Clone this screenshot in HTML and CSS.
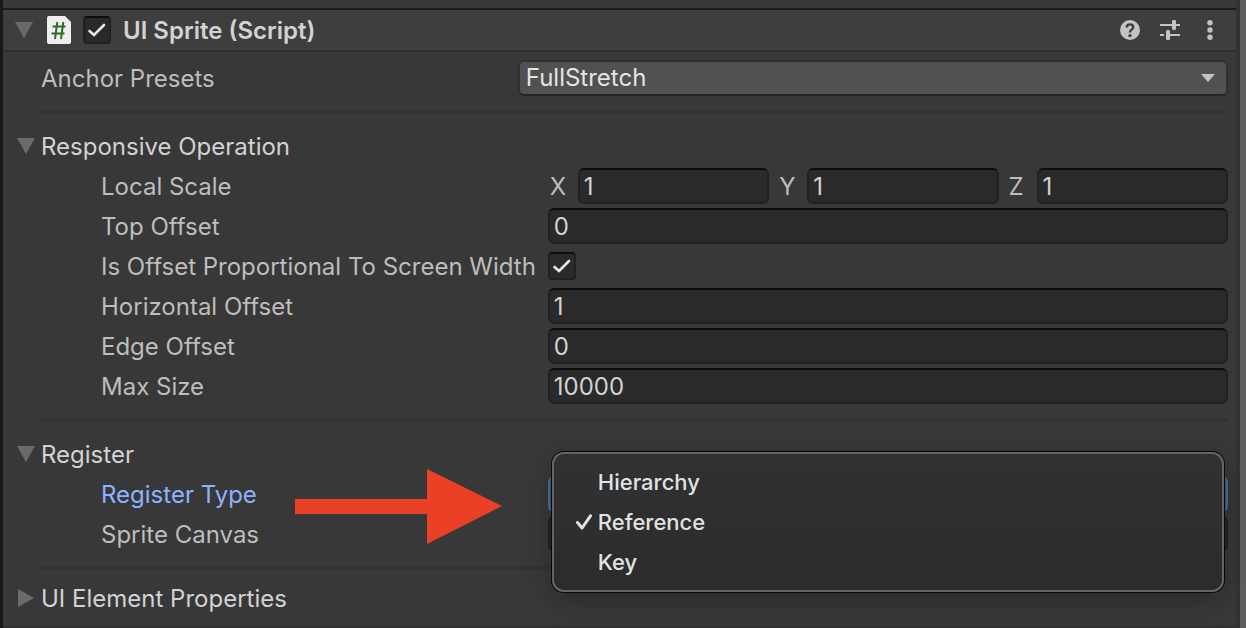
FILE: index.html
```html
<!DOCTYPE html>
<html lang="en">
<head>
<meta charset="utf-8">
<meta name="viewport" content="width=device-width, initial-scale=1">
<title>Inspector</title>
<link rel="stylesheet" href="styles.css">
</head>
<body>
<main class="inspector">
  <header class="header">
    <button class="fold" type="button" aria-label="Collapse component"><svg class="tri" viewBox="0 0 18 16"><path d="M0 0H18L9 16Z"/></svg></button>
    <svg class="script-icon" viewBox="0 0 24 28" aria-hidden="true">
      <path fill="#efefef" d="M2 0H18L24 6V26Q24 28 22 28H2Q0 28 0 26V2Q0 0 2 0Z"/>
      <path fill="none" stroke="#2f6b2c" stroke-width="2" d="M10.300 6L8 23M16.300 6L14 23M5.500 10.500H18.500M4.500 17.500H17.500"/>
    </svg>
    <input class="check" type="checkbox" checked aria-label="Enable UI Sprite">
    <h1 class="title">UI Sprite (Script)</h1>
    <div class="tools">
      <button class="tool" type="button" aria-label="Help"><svg viewBox="0 0 20 20"><circle cx="10" cy="10" r="10" fill="#c4c4c4"/><path d="M6.800 7.600Q6.800 4.400 10 4.400Q13.200 4.400 13.200 7.200Q13.200 8.800 11.500 9.700Q10 10.500 10 12.600" fill="none" stroke="#3e3e3e" stroke-width="2.400"/><circle cx="10" cy="15.600" r="1.700" fill="#3e3e3e"/></svg></button>
      <button class="tool" type="button" aria-label="Presets"><svg viewBox="0 0 20 20"><path d="M0 5H13M16 5H20M0 15H4M10 15H20" stroke="#c4c4c4" stroke-width="2"/><path d="M14 1.700V8.300M8 11.700V18.300" stroke="#c4c4c4" stroke-width="4" stroke-linecap="round"/></svg></button>
      <button class="tool" type="button" aria-label="More options"><svg viewBox="0 0 20 20" fill="#c4c4c4"><circle cx="10" cy="2.700" r="2.700"/><circle cx="10" cy="10" r="2.700"/><circle cx="10" cy="17.300" r="2.700"/></svg></button>
    </div>
  </header>

  <div class="body">
    <div class="row anchor">
      <label class="label" for="anchor">Anchor Presets</label>
      <div class="select-wrap">
        <select class="select" id="anchor"><option>FullStretch</option></select>
        <svg class="caret" viewBox="0 0 14 8" aria-hidden="true"><path d="M0 0H14L7 8Z"/></svg>
      </div>
    </div>
    <hr class="rule">

    <section class="group">
      <h2 class="group-title"><button class="fold" type="button" aria-label="Collapse Responsive Operation"><svg class="tri" viewBox="0 0 18 16"><path d="M0 0H18L9 16Z"/></svg></button><span class="caption">Responsive Operation</span></h2>
      <div class="props">
        <div class="row">
          <span class="label">Local Scale</span>
          <div class="vector">
            <label class="axis" for="sx">X</label><input class="field" id="sx" value="1">
            <label class="axis" for="sy">Y</label><input class="field" id="sy" value="1">
            <label class="axis" for="sz">Z</label><input class="field" id="sz" value="1">
          </div>
        </div>
        <div class="row"><label class="label" for="top">Top Offset</label><input class="field" id="top" value="0"></div>
        <div class="row"><label class="label" for="prop">Is Offset Proportional To Screen Width</label><input class="check" type="checkbox" id="prop" checked></div>
        <div class="row"><label class="label" for="hor">Horizontal Offset</label><input class="field" id="hor" value="1"></div>
        <div class="row"><label class="label" for="edge">Edge Offset</label><input class="field" id="edge" value="0"></div>
        <div class="row"><label class="label" for="max">Max Size</label><input class="field" id="max" value="10000"></div>
      </div>
    </section>
    <hr class="rule">

    <section class="group">
      <h2 class="group-title"><button class="fold" type="button" aria-label="Collapse Register"><svg class="tri" viewBox="0 0 18 16"><path d="M0 0H18L9 16Z"/></svg></button><span class="caption">Register</span></h2>
      <div class="props">
        <div class="row">
          <span class="label active" id="type-label">Register Type
            <svg class="arrow" viewBox="0 0 207 75" aria-hidden="true"><path d="M0 30H132V0L207 37L132 75V45H0Z"/></svg>
          </span>
          <div class="picker">
            <button class="field current" type="button" aria-labelledby="type-label"></button>
            <div class="menu" role="listbox" aria-labelledby="type-label">
              <button class="option" type="button" role="option">Hierarchy</button>
              <button class="option" type="button" role="option" aria-selected="true"><svg class="tick" viewBox="0 0 16 16" aria-hidden="true"><path d="M1.500 8.500L6 14L14.500 1.800"/></svg>Reference</button>
              <button class="option" type="button" role="option">Key</button>
            </div>
          </div>
        </div>
        <div class="row"><label class="label" for="canvas">Sprite Canvas</label><input class="field" id="canvas"></div>
      </div>
    </section>
    <hr class="rule">

    <section class="group closed">
      <h2 class="group-title"><button class="fold" type="button" aria-label="Expand UI Element Properties"><svg class="tri right" viewBox="0 0 16 18"><path d="M0 0L16 9L0 18Z"/></svg></button><span class="caption">UI Element Properties</span></h2>
    </section>
  </div>
</main>
</body>
</html>
```

FILE: styles.css
```css
* { box-sizing: border-box; }

body {
  margin: 0;
  background: #383838;
  color: #bdbdbd;
  font: 400 24px/40px Inter, "Liberation Sans", sans-serif;
}

button, input, select { font: inherit; color: inherit; margin: 0; }
button { padding: 0; border: 0; background: none; }

.inspector {
  min-height: 100vh;
  padding-top: 8px;
  border-left: 3px solid #191919;
  border-right: 6px solid #5f5f5f;
  box-shadow: inset -4px 0 #323232;
}

.header {
  display: flex;
  align-items: center;
  height: 44px;
  margin-right: 4px;
  padding: 0 16px 0 12px;
  border-top: 2px solid #1a1a1a;
  border-bottom: 2px solid #303030;
  background: #3e3e3e;
}

.fold { display: flex; align-items: center; justify-content: center; width: 18px; }
.tri { width: 18px; height: 16px; fill: #6a6a6a; }
.tri.right { width: 16px; height: 18px; }
.script-icon { width: 24px; height: 28px; margin: 0 12px 0 14px; }

.check {
  appearance: none;
  flex: none;
  width: 28px;
  height: 28px;
  border: 2px solid #212121;
  border-top-color: #0d0d0d;
  border-radius: 4px;
  background: #2a2a2a;
}
.check:checked {
  background: #2a2a2a url("data:image/svg+xml,%3Csvg xmlns='http://www.w3.org/2000/svg' viewBox='0 0 24 24'%3E%3Cpath d='M4.500 13L9 17L19 7' fill='none' stroke='%23e8e8e8' stroke-width='2.600' stroke-linecap='round'/%3E%3C/svg%3E") center / 24px 24px no-repeat;
}

.title { margin: 0 0 0 12px; padding-top: 2px; font-size: 24px; font-weight: 600; color: #d2d2d2; }
.tools { display: flex; gap: 20px; margin-left: auto; }
.tool { display: flex; width: 20px; height: 20px; }
.tool svg { width: 20px; height: 20px; }

.body { padding: 6px 12px 0 38px; }
.row { display: flex; align-items: center; height: 40px; }
.label { flex: none; width: calc(40% - 4px); padding-top: 2px; white-space: nowrap; }
.anchor .label { width: calc(40% + 2px); }
.rule { height: 4px; margin: 12px 0 12px -2px; border: 0; background: #333333; }

.group-title { display: flex; height: 40px; margin: 0 0 0 -24px; font-size: 24px; font-weight: inherit; color: #d2d2d2; }
.group-title .fold { margin-right: 6px; }
.caption { padding-top: 1px; }
.props { padding-left: 60px; }
.closed {
  margin: -4px -8px 0 -38px;
  padding: 0 0 8px 38px;
  border-bottom: 2px solid #303030;
}

.field {
  flex: 1;
  min-width: 0;
  height: 36px;
  padding: 2px 4px 0;
  border: 2px solid #212121;
  border-top-color: #0d0d0d;
  border-radius: 6px;
  background: #2a2a2a;
  color: #d2d2d2;
}

.select-wrap { position: relative; display: flex; flex: 1; }
.select {
  appearance: none;
  flex: 1;
  height: 36px;
  padding: 0 6px;
  border: 2px solid #303030;
  border-bottom-color: #242424;
  border-radius: 6px;
  background: #515151;
  color: #e4e4e4;
  line-height: 32px;
}
.caret { position: absolute; right: 13px; top: 14px; width: 14px; height: 8px; fill: #c4c4c4; pointer-events: none; }

.vector { display: flex; flex: 1; align-items: center; min-width: 0; }
.axis { width: 30px; padding: 2px 0 0 2px; }
.vector .field + .axis { width: 38px; padding-left: 10px; }

.active { position: relative; color: #8ab4ff; }
.arrow { position: absolute; left: 194px; top: -4px; width: 207px; height: 75px; fill: #ea4025; }

.picker { position: relative; display: flex; flex: 1; }
.current { border-color: #416db0; background: #515151; }
.menu {
  position: absolute;
  z-index: 1;
  left: 4px;
  right: 4px;
  top: -24px;
  display: flex;
  flex-direction: column;
  padding: 8px 0;
  border: 2px solid #636464;
  border-radius: 12px;
  background: linear-gradient(#303132, #2c2c2d);
  box-shadow: 0 0 0 1px #080808, 0 8px 28px rgba(0, 0, 0, 0.25);
}
.option { position: relative; height: 40px; padding-left: 44px; font-size: 22px; font-weight: 500; color: #e2e2e2; text-align: left; }
.tick { position: absolute; left: 22px; top: 12px; width: 16px; height: 16px; fill: none; stroke: #e2e2e2; stroke-width: 3; stroke-linecap: round; stroke-linejoin: round; }
```
